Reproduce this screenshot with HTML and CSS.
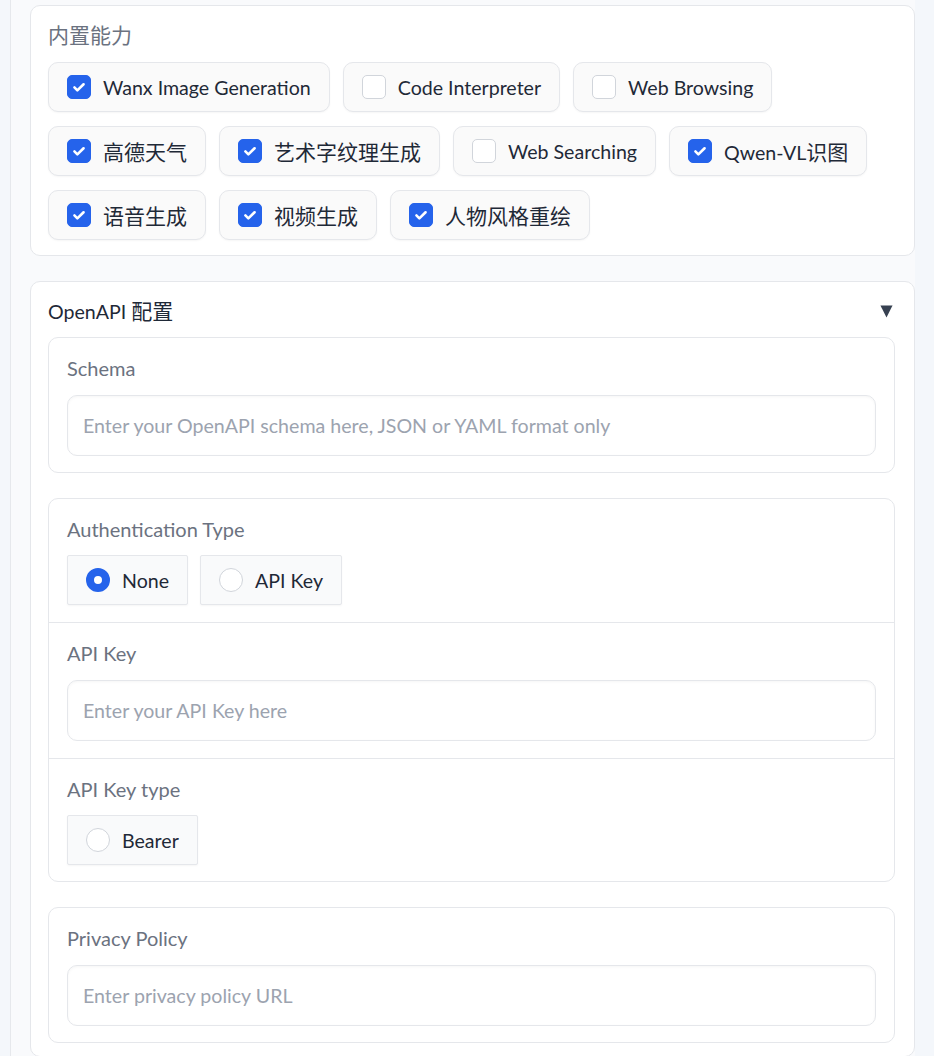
FILE: index.html
```html
<!DOCTYPE html>
<html lang="zh">
<head>
<meta charset="utf-8">
<link rel="stylesheet" href="styles.css">
</head>
<body>
<div class="panel">
  <section class="card">
    <div class="label zh">内置能力</div>
    <div class="pills">
      <label class="pill"><span class="cb on"><svg viewBox="0 0 24 24"><path d="M7 12.5l3.2 3.2L17 9" /></svg></span>Wanx Image Generation</label>
      <label class="pill"><span class="cb"></span>Code Interpreter</label>
      <label class="pill"><span class="cb"></span>Web Browsing</label>
      <label class="pill"><span class="cb on"><svg viewBox="0 0 24 24"><path d="M7 12.5l3.2 3.2L17 9" /></svg></span><span class="zh">高德天气</span></label>
      <label class="pill"><span class="cb on"><svg viewBox="0 0 24 24"><path d="M7 12.5l3.2 3.2L17 9" /></svg></span><span class="zh">艺术字纹理生成</span></label>
      <label class="pill"><span class="cb"></span>Web Searching</label>
      <label class="pill"><span class="cb on"><svg viewBox="0 0 24 24"><path d="M7 12.5l3.2 3.2L17 9" /></svg></span><span>Qwen-VL<span class="zh">识图</span></span></label>
      <label class="pill"><span class="cb on"><svg viewBox="0 0 24 24"><path d="M7 12.5l3.2 3.2L17 9" /></svg></span><span class="zh">语音生成</span></label>
      <label class="pill"><span class="cb on"><svg viewBox="0 0 24 24"><path d="M7 12.5l3.2 3.2L17 9" /></svg></span><span class="zh">视频生成</span></label>
      <label class="pill"><span class="cb on"><svg viewBox="0 0 24 24"><path d="M7 12.5l3.2 3.2L17 9" /></svg></span><span class="zh">人物风格重绘</span></label>
    </div>
  </section>

  <section class="card card2">
    <div class="acc-head">
      <span class="acc-title">OpenAPI <span class="zh">配置</span></span>
      <svg class="tri" viewBox="0 0 14 14"><polygon points="0.5,1 13.5,1 7,14" /></svg>
    </div>
    <div class="box">
      <div class="sec">
        <div class="label">Schema</div>
        <div class="input">Enter your OpenAPI schema here, JSON or YAML format only</div>
      </div>
    </div>
    <div class="box">
      <div class="sec">
        <div class="label">Authentication Type</div>
        <div class="radios">
          <label class="radio"><span class="rd on"></span>None</label>
          <label class="radio"><span class="rd"></span>API Key</label>
        </div>
      </div>
      <div class="sec">
        <div class="label">API Key</div>
        <div class="input">Enter your API Key here</div>
      </div>
      <div class="sec">
        <div class="label">API Key type</div>
        <div class="radios">
          <label class="radio"><span class="rd"></span>Bearer</label>
        </div>
      </div>
    </div>
    <div class="box">
      <div class="sec">
        <div class="label">Privacy Policy</div>
        <div class="input">Enter privacy policy URL</div>
      </div>
    </div>
  </section>
</div>
</body>
</html>
```

FILE: styles.css
```css
* { box-sizing: border-box; }
html, body { margin: 0; padding: 0; }
body {
  background: #f4f7fb;
  font-family: Lato, "Noto Sans CJK SC", sans-serif;
  font-size: 19.6px;
  color: #1f2937;
  height: 1056px;
  overflow: hidden;
}
.zh { font-size: 21px; }
.panel {
  margin-left: 10px;
  width: 905px;
  min-height: 1056px;
  border-left: 1px solid #e6e8ec;
  background: #f9fafc;
  padding: 5px 0 0 19px;
  display: flex;
  flex-direction: column;
  gap: 25px;
}
.card {
  background: #fff;
  border: 1px solid #e5e7eb;
  border-radius: 10px;
  padding: 16px 19px 15px 17px;
}
.label {
  color: #6b7280;
  font-size: 20px;
  line-height: 26px;
  height: 26px;
}
.label.zh { font-size: 21px; }
.pills {
  margin-top: 14px;
  display: flex;
  flex-wrap: wrap;
  column-gap: 13px;
  row-gap: 14px;
}
.pill {
  display: flex;
  align-items: center;
  gap: 12px;
  height: 50px;
  padding: 0 18px;
  border: 1px solid #e5e7eb;
  border-radius: 10px;
  background: #fafafa;
  box-shadow: 0 1px 2px rgba(0,0,0,0.04);
  color: #1f2937;
  white-space: nowrap;
}
.cb {
  width: 24px;
  height: 24px;
  border-radius: 5px;
  border: 1px solid #d1d5db;
  background: #fff;
  flex: none;
  display: flex;
  align-items: center;
  justify-content: center;
}
.cb.on {
  background: #2563eb;
  border-color: #2563eb;
}
.cb svg { width: 22px; height: 22px; }
.cb svg path {
  fill: none;
  stroke: #fff;
  stroke-width: 2.8;
  stroke-linecap: round;
  stroke-linejoin: round;
}
.card2 {
  padding-bottom: 13px;
  display: flex;
  flex-direction: column;
  gap: 25px;
}
.acc-head {
  display: flex;
  align-items: center;
  justify-content: space-between;
  height: 26px;
  line-height: 26px;
  margin-bottom: -12px;
}
.acc-title { font-size: 19.6px; color: #1f2937; }
.acc-title .zh { font-size: 21px; }
.tri { width: 13px; height: 14px; margin-right: 2px; }
.tri polygon { fill: #374151; }
.box {
  border: 1px solid #e5e7eb;
  border-radius: 10px;
  background: #fff;
}
.sec {
  padding: 17px 18px 17px 18px;
  display: flex;
  flex-direction: column;
  gap: 13px;
}
.sec:last-child { padding-bottom: 16px; }
.sec + .sec { border-top: 1px solid #e5e7eb; }
.input {
  height: 61px;
  margin-top: 1px;
  border: 1px solid #e5e7eb;
  border-radius: 10px;
  background: #fff;
  box-shadow: inset 0 1px 3px rgba(0,0,0,0.04);
  padding: 0 15px;
  display: flex;
  align-items: center;
  color: #9ca3af;
}
.radios {
  display: flex;
  gap: 12px;
}
.radio {
  display: flex;
  align-items: center;
  gap: 12px;
  height: 50px;
  padding: 0 18px 0 18px;
  border: 1px solid #e5e7eb;
  border-radius: 2px;
  background: #f9fafb;
  box-shadow: 0 1px 2px rgba(0,0,0,0.04);
  color: #1f2937;
}
.rd {
  width: 24px;
  height: 24px;
  border-radius: 50%;
  border: 1px solid #d1d5db;
  background: #fff;
  flex: none;
}
.rd.on {
  border: 8px solid #2563eb;
  background: #fff;
}
```
